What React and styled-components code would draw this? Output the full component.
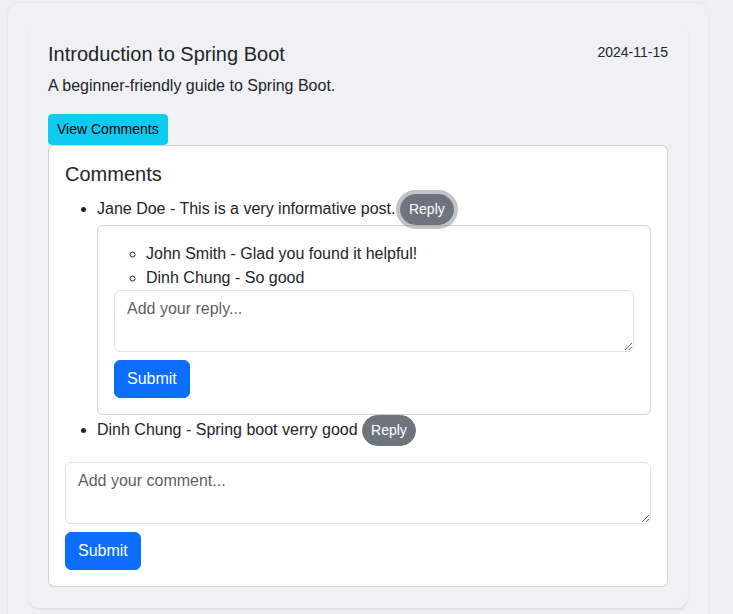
import React from "react";
import styled, { createGlobalStyle } from "styled-components";

const Global = createGlobalStyle`
  html, body { margin: 0; padding: 0; }
  body {
    background: #eef0f4;
    font-family: "Liberation Sans", Arial, sans-serif;
    font-size: 16px;
    line-height: 1.5;
    color: #212529;
  }
  * { box-sizing: border-box; }
`;

const Shell = styled.div`
  margin: 3px 0 0 8px;
  width: 700px;
  min-height: 640px;
  background: #f0f1f5;
  border-radius: 12px 12px 0 0;
  box-shadow: 0 0 3px rgba(0, 0, 0, 0.08);
  padding: 19px 20px 0;
`;

const Post = styled.article`
  border-radius: 12px;
  background: #f0f1f5;
  padding: 20px 20px 21px;
  box-shadow: 0 2px 2px rgba(0, 0, 0, 0.07);
`;

const Header = styled.div`
  display: flex;
  justify-content: space-between;
  align-items: flex-start;
  margin-bottom: 8px;
`;

const Title = styled.h5`
  margin: 0;
  font-size: 20px;
  font-weight: 400;
  line-height: 1.2;
`;

const DateText = styled.small`
  font-size: 14px;
  line-height: 1.5;
`;

const Desc = styled.p`
  margin: 0 0 16px;
`;

const Btn = styled.button`
  display: inline-block;
  font-family: inherit;
  font-weight: 400;
  line-height: 1.5;
  text-align: center;
  vertical-align: middle;
  cursor: pointer;
  border: 1px solid ${(p) => p.$bg};
  background: ${(p) => p.$bg};
  color: ${(p) => p.$fg};
  font-size: ${(p) => (p.$small ? "14px" : "16px")};
  padding: ${(p) => (p.$small ? "4px 8px" : "6px 12px")};
  border-radius: ${(p) => (p.$pill ? "50rem" : p.$small ? "4px" : "6px")};
  box-shadow: ${(p) => (p.$focus ? "0 0 0 4px rgba(130, 138, 145, 0.5)" : "none")};
  margin-top: ${(p) => (p.$mt ? `${p.$mt}px` : "0")};
`;

const Panel = styled.div`
  background: #fff;
  border: 1px solid rgba(0, 0, 0, 0.175);
  border-radius: 6px;
  padding: 16px;
`;

const PanelTitle = styled.h5`
  margin: 0 0 8px;
  font-size: 20px;
  font-weight: 400;
  line-height: 1.2;
`;

const List = styled.ul`
  margin: 0 0 ${(p) => p.$mb}px;
  padding-left: 32px;
  list-style-type: ${(p) => p.$type};
`;

const ReplyBox = styled.div`
  border: 1px solid rgba(0, 0, 0, 0.175);
  border-radius: 6px;
  padding: 16px;
`;

const TextArea = styled.textarea`
  display: block;
  width: 100%;
  padding: 6px 12px;
  font-family: inherit;
  font-size: 16px;
  line-height: 1.5;
  color: #212529;
  background: #fff;
  border: 1px solid #dee2e6;
  border-radius: 6px;
  outline: none;
  &::placeholder { color: rgba(33, 37, 41, 0.75); }
`;

export default function App() {
  return (
    <>
      <Global />
      <Shell>
        <Post>
          <Header>
            <Title>Introduction to Spring Boot</Title>
            <DateText>2024-11-15</DateText>
          </Header>
          <Desc>A beginner-friendly guide to Spring Boot.</Desc>
          <Btn $small $bg="#0dcaf0" $fg="#000">View Comments</Btn>
          <Panel>
            <PanelTitle>Comments</PanelTitle>
            <List $type="disc" $mb={16}>
              <li>
                Jane Doe - This is a very informative post.{" "}
                <Btn $small $pill $focus $bg="#6c757d" $fg="#fff">Reply</Btn>
                <ReplyBox>
                  <List $type="circle" $mb={0}>
                    <li>John Smith - Glad you found it helpful!</li>
                    <li>Dinh Chung - So good</li>
                  </List>
                  <TextArea rows={2} placeholder="Add your reply..." />
                  <Btn $mt={8} $bg="#0d6efd" $fg="#fff">Submit</Btn>
                </ReplyBox>
              </li>
              <li>
                Dinh Chung - Spring boot verry good{" "}
                <Btn $small $pill $bg="#6c757d" $fg="#fff">Reply</Btn>
              </li>
            </List>
            <TextArea rows={2} placeholder="Add your comment..." />
            <Btn $mt={8} $bg="#0d6efd" $fg="#fff">Submit</Btn>
          </Panel>
        </Post>
      </Shell>
    </>
  );
}
